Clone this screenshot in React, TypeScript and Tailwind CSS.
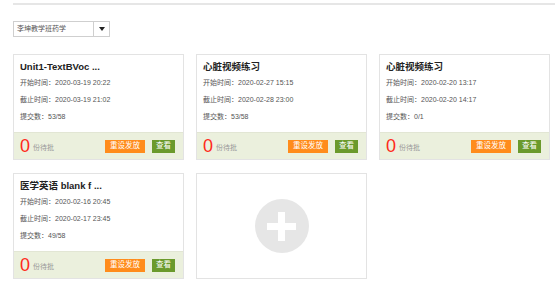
import React from "react";

type Item = { title: string; start: string; end: string; submit: string };

const items: Item[] = [
  { title: "Unit1-TextBVoc ...", start: "2020-03-19 20:22", end: "2020-03-19 21:02", submit: "53/58" },
  { title: "心脏视频练习", start: "2020-02-27 15:15", end: "2020-02-28 23:00", submit: "53/58" },
  { title: "心脏视频练习", start: "2020-02-20 13:17", end: "2020-02-20 14:17", submit: "0/1" },
  { title: "医学英语 blank f ...", start: "2020-02-16 20:45", end: "2020-02-17 23:45", submit: "49/58" },
];

function Card({ it }: { it: Item }) {
  return (
    <div className="w-[171px] h-[106px] border border-[#e3e3e3] bg-white flex flex-col">
      <div className="h-[77px] px-[6px] pt-[5px]">
        <div className="text-[9.5px] leading-[14px] font-bold text-[#222]">{it.title}</div>
        <div className="text-[7px] leading-[17px] text-[#555]">开始时间：{it.start}</div>
        <div className="text-[7px] leading-[17px] text-[#555]">截止时间：{it.end}</div>
        <div className="text-[7px] leading-[17px] text-[#555]">提交数：{it.submit}</div>
      </div>
      <div className="flex-1 bg-[#ebf0dd] border-t border-[#e2e6d4] flex items-center pl-[6px] pr-[8px]">
        <span className="text-[18px] leading-none text-[#ff2a1a] font-medium">0</span>
        <span className="ml-[3px] mt-[4px] text-[7px] text-[#999]">份待批</span>
        <div className="ml-auto flex items-center gap-[7px]">
          <div className="w-[40px] h-[13px] bg-[#ff8c1c] text-white text-[7.5px] flex items-center justify-center">重设发放</div>
          <div className="w-[23px] h-[13px] bg-[#6b9a2c] text-white text-[7.5px] flex items-center justify-center">查看</div>
        </div>
      </div>
    </div>
  );
}

export default function App() {
  return (
    <div
      className="w-[558px] h-[295px] bg-white overflow-hidden pl-[13px] pt-[3px]"
      style={{ fontFamily: '"Liberation Sans", "Noto Sans CJK SC", sans-serif' }}
    >
      <div className="w-[542px] h-[2px] bg-[#e6e6e6]" />
      <div className="mt-[16px] w-[97px] h-[16px] border border-[#cfcfcf] flex">
        <div className="flex-1 text-[7px] leading-[14px] text-[#555] pl-[3px]">李坤教学班药学</div>
        <div className="w-[16px] border-l border-[#cfcfcf] flex items-center justify-center">
          <svg width="6" height="4" viewBox="0 0 6 4">
            <polygon points="0,0 6,0 3,4" fill="#222" />
          </svg>
        </div>
      </div>
      <div className="mt-[17px] grid grid-cols-[171px_171px_171px] gap-x-[12px] gap-y-[13px]">
        {items.map((it, i) => (
          <Card key={i} it={it} />
        ))}
        <div className="w-[171px] h-[106px] border border-[#e3e3e3] bg-white flex items-center justify-center">
          <div className="w-[54px] h-[54px] rounded-full bg-[#e6e6e6] relative flex items-center justify-center">
            <div className="absolute w-[29px] h-[7px] bg-white" />
            <div className="absolute w-[7px] h-[29px] bg-white" />
          </div>
        </div>
      </div>
    </div>
  );
}
